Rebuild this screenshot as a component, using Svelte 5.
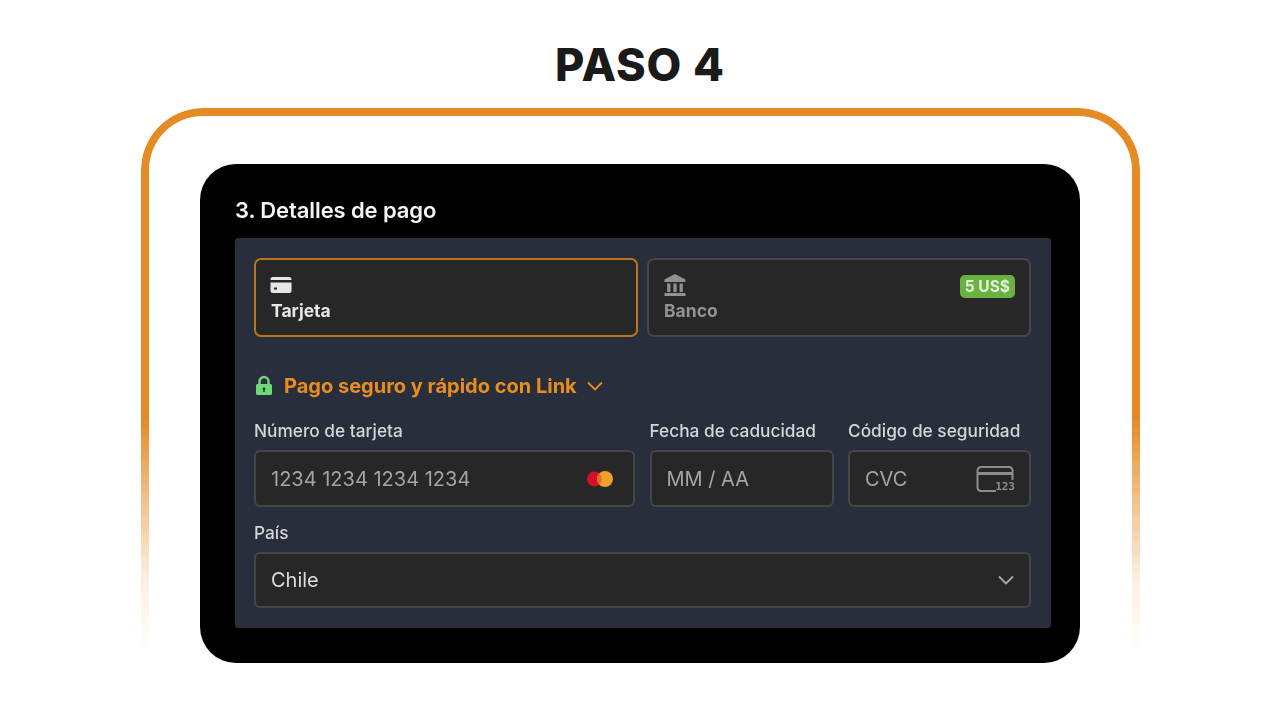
<script lang="ts">
  // payment step screenshot: heading, fading orange frame, stripe-like form
  const fields = [
    { label: 'Fecha de caducidad', placeholder: 'MM / AA', kind: 'date' },
    { label: 'Código de seguridad', placeholder: 'CVC', kind: 'cvc' },
  ];
</script>

<main class="page">
  <h1>PASO 4</h1>
  <section class="frame">
    <div class="card">
      <h2>3. Detalles de pago</h2>
      <div class="panel">
        <div class="tabs">
          <div class="tab active">
            <svg class="tab-icon" viewBox="0 0 22 18" width="22" height="18" aria-hidden="true">
              <path fill="currentColor" d="M3 1h16a2.500 2.500 0 0 1 2.500 2.500V4H.5v-.5A2.500 2.500 0 0 1 3 1z" />
              <path fill="currentColor" fill-rule="evenodd" d="M.5 6.500h21v8A2.500 2.500 0 0 1 19 17H3a2.500 2.500 0 0 1-2.500-2.500zM4 11.500v2h3v-2z" />
            </svg>
            <span>Tarjeta</span>
          </div>
          <div class="tab">
            <svg class="tab-icon bank" viewBox="0 0 22 22" width="22" height="22" aria-hidden="true">
              <path fill="currentColor" d="M11 0 21.500 5.500V8H.5V5.500z" />
              <path fill="currentColor" d="M3.200 9.500h3.200v8.500H3.200zM9.400 9.500h3.200v8.500H9.400zM15.600 9.500h3.200v8.500h-3.200zM.5 19h21v3H.5z" />
            </svg>
            <span>Banco</span>
            <b class="badge">5 US$</b>
          </div>
        </div>

        <div class="link-row">
          <svg viewBox="0 0 18 22" width="18" height="22" aria-hidden="true">
            <path fill="none" stroke="#6fd978" stroke-width="2.400" d="M4.500 10V6.500a4.500 4.500 0 0 1 9 0V10" />
            <path fill="#6fd978" fill-rule="evenodd" d="M2.500 9h13A1.500 1.500 0 0 1 17 10.500v8a1.500 1.500 0 0 1-1.500 1.500h-13A1.500 1.500 0 0 1 1 18.500v-8A1.500 1.500 0 0 1 2.500 9zM9 12.500a1.500 1.500 0 0 0-.7 2.800V17h1.400v-1.700A1.500 1.500 0 0 0 9 12.500z" />
          </svg>
          <span>Pago seguro y rápido con Link</span>
          <svg class="chev" viewBox="0 0 16 10" width="16" height="10" aria-hidden="true">
            <path d="M1 1.500 8 8.500l7-7" />
          </svg>
        </div>

        <div class="row">
          <div class="field">
            <label for="num">Número de tarjeta</label>
            <div class="input" id="num">
              <span>1234 1234 1234 1234</span>
              <svg class="mc" viewBox="0 0 28 18" width="28" height="18" aria-hidden="true">
                <circle cx="8.500" cy="9" r="7.500" fill="#d5102a" />
                <circle cx="19" cy="9" r="8" fill="#eea02c" />
                <path d="M13.500 3.500a8 8 0 0 1 0 11 7.500 7.500 0 0 1 0-11z" fill="#ea6a22" />
              </svg>
            </div>
          </div>
          {#each fields as f}
            <div class="field">
              <label for={f.kind}>{f.label}</label>
              <div class="input" id={f.kind}>
                <span>{f.placeholder}</span>
                {#if f.kind === 'cvc'}
                  <div class="cvc-icon">
                    <svg viewBox="0 0 38 26" width="38" height="26" aria-hidden="true">
                      <path d="M20 25H5a3.500 3.500 0 0 1-3.500-3.500v-17A3.500 3.500 0 0 1 5 1h28a3.500 3.500 0 0 1 3.500 3.500V14" />
                      <path class="strip" d="M1.500 7.500h35" />
                    </svg>
                    <small>123</small>
                  </div>
                {/if}
              </div>
            </div>
          {/each}
        </div>

        <div class="field country">
          <label for="pais">País</label>
          <div class="input" id="pais">
            <span class="value">Chile</span>
            <svg class="chev grey" viewBox="0 0 16 10" width="16" height="10" aria-hidden="true">
              <path d="M1 1.500 8 8.500l7-7" />
            </svg>
          </div>
        </div>
      </div>
    </div>
  </section>
</main>

<style>
  :global(body) {
    margin: 0;
    background: #fff;
  }
  .page {
    width: 1280px;
    height: 704px;
    overflow: hidden;
    font-family: Inter, 'Liberation Sans', sans-serif;
  }
  h1 {
    margin: 0;
    padding-top: 37px;
    height: 72px;
    box-sizing: border-box;
    text-align: center;
    font-size: 45px;
    line-height: 55px;
    font-weight: 800;
    letter-spacing: 0.9px;
    color: #1a1a1a;
  }
  .frame {
    position: relative;
    box-sizing: border-box;
    width: 999px;
    margin: 36px 0 0 141px;
    padding: 56px 60px 0 59px;
  }
  /* the orange outline fades out toward the bottom, the card does not */
  .frame::before {
    content: '';
    position: absolute;
    inset: 0 0 -8px 0;
    border: 8px solid #e68a24;
    border-bottom: 0;
    border-radius: 62px 62px 0 0;
    -webkit-mask-image: linear-gradient(#000 55%, rgba(0, 0, 0, 0.5) 70.5%, rgba(0, 0, 0, 0.13) 84%, transparent 97%);
    mask-image: linear-gradient(#000 55%, rgba(0, 0, 0, 0.5) 70.5%, rgba(0, 0, 0, 0.13) 84%, transparent 97%);
  }
  .card {
    position: relative;
    height: 499px;
    box-sizing: border-box;
    padding: 32px 29px 0 35px;
    background: #000;
    border-radius: 36px;
    filter: blur(0.35px);
  }
  h2 {
    margin: 0 0 14px;
    font-size: 22px;
    line-height: 28px;
    font-weight: 600;
    letter-spacing: -0.1px;
    color: #f4f4f4;
  }
  .panel {
    height: 390px;
    box-sizing: border-box;
    padding: 20px 20px 0 19px;
    background: #282e3b;
    border-radius: 3px;
  }
  .tabs {
    display: grid;
    grid-template-columns: 384px 384px;
    gap: 9px;
  }
  .tab {
    position: relative;
    height: 79px;
    box-sizing: border-box;
    padding: 14px 15px 0;
    display: flex;
    flex-direction: column;
    gap: 4px;
    background: #272727;
    border: 2px solid #454649;
    border-radius: 7px;
    color: #929292;
    font-size: 17.500px;
    line-height: 22px;
    font-weight: 700;
  }
  .tab.active {
    border-color: #b9751f;
    color: #e6e6e6;
  }
  .tab-icon {
    display: block;
    height: 22px;
    margin-left: -1px;
  }
  .tab-icon.bank {
    margin-left: 0;
  }
  .badge {
    position: absolute;
    top: 15px;
    right: 14px;
    padding: 0 5px;
    height: 23px;
    line-height: 23px;
    font-size: 15.500px;
    font-weight: 700;
    color: #e4efd9;
    background: #68b33f;
    border-radius: 5px;
  }
  .link-row {
    display: flex;
    align-items: center;
    height: 24px;
    margin-top: 37px;
    color: #e98e1e;
    font-size: 20px;
    font-weight: 700;
  }
  .link-row svg:first-child {
    margin-left: 1px;
  }
  .link-row span {
    margin-left: 11px;
  }
  .chev {
    margin-left: 10px;
    fill: none;
    stroke: #e98e1e;
    stroke-width: 1.800;
  }
  .chev.grey {
    margin: 0;
    stroke: #a9a9a9;
  }
  .row {
    display: grid;
    grid-template-columns: 381px 184px 183px;
    column-gap: 14.500px;
    margin-top: 22px;
  }
  .field label {
    display: block;
    height: 30px;
    font-size: 17.300px;
    line-height: 22px;
    font-weight: 500;
    color: #d6d6d6;
    white-space: nowrap;
  }
  .input {
    box-sizing: border-box;
    height: 57px;
    padding: 0 15px;
    display: flex;
    align-items: center;
    justify-content: space-between;
    background: #272727;
    border: 2px solid #454649;
    border-radius: 6px;
    color: #a5a5a5;
    font-size: 20px;
  }
  .value {
    color: #dcdcdc;
  }
  .mc {
    margin-right: 4px;
  }
  .cvc-icon {
    position: relative;
    width: 38px;
    height: 26px;
    color: #8d8d8d;
  }
  .cvc-icon svg {
    display: block;
    fill: none;
    stroke: #8d8d8d;
    stroke-width: 2;
  }
  .cvc-icon .strip {
    stroke-width: 3;
  }
  .cvc-icon small {
    position: absolute;
    right: -1px;
    bottom: -1px;
    font-family: 'DejaVu Sans Mono', monospace;
    font-size: 11px;
    line-height: 12px;
    font-weight: 700;
  }
  .country {
    margin-top: 15px;
  }
  .country .input {
    height: 56px;
  }
  .country label {
    height: 30px;
  }
</style>
